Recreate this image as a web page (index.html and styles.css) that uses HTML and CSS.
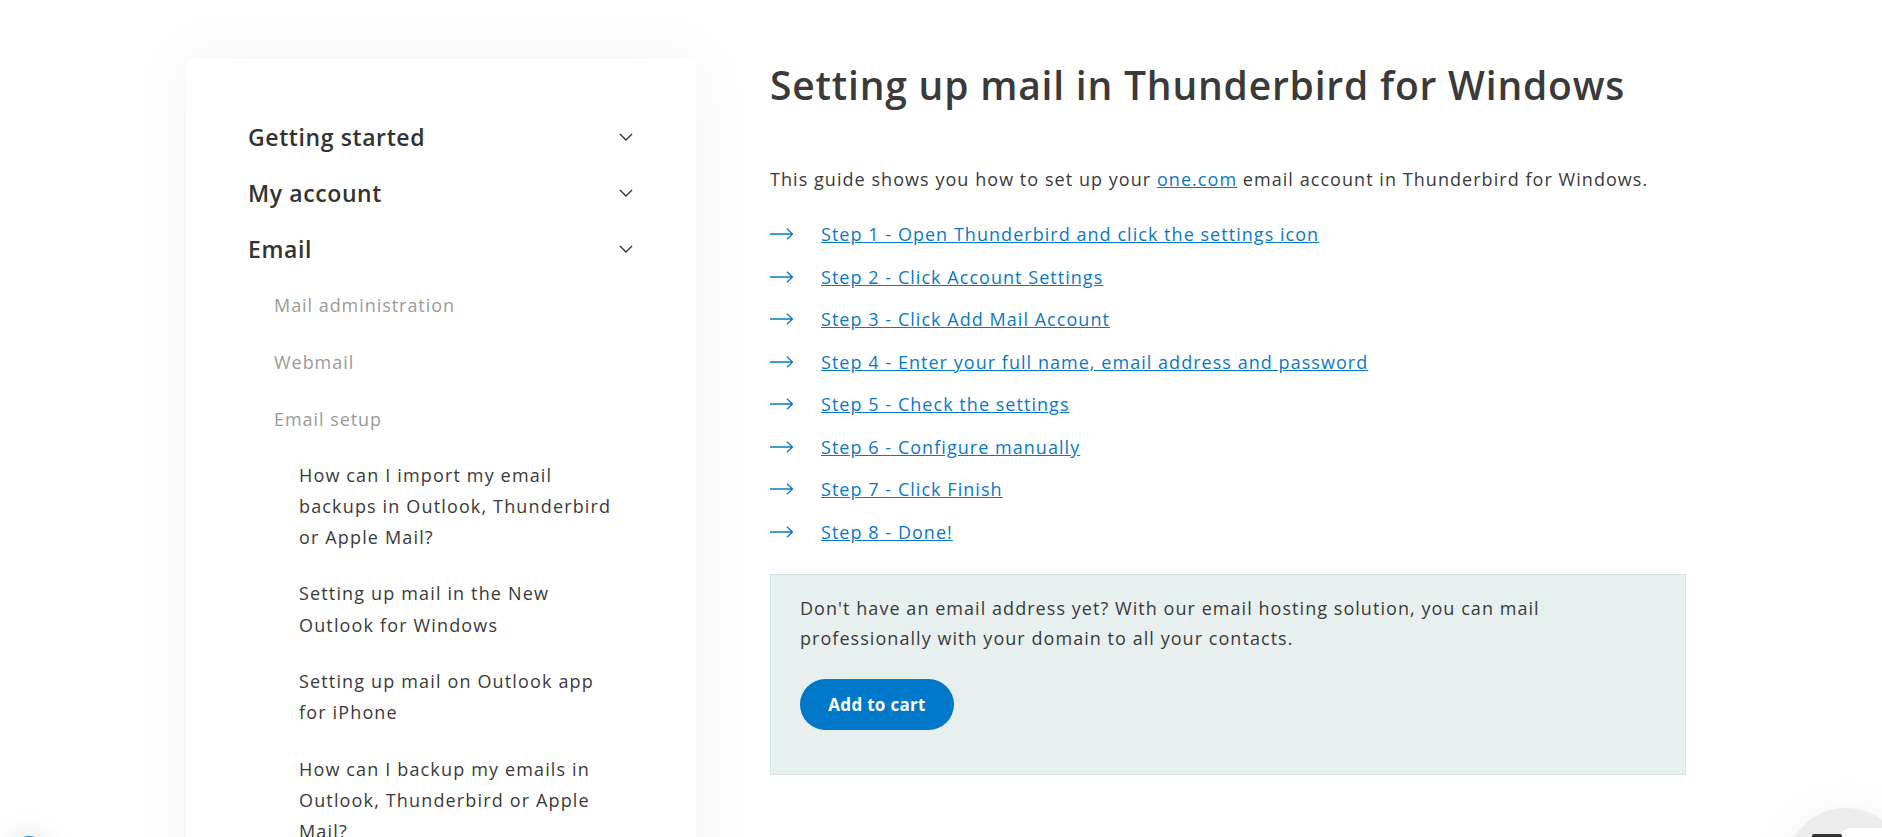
FILE: index.html
```html
<!DOCTYPE html>
<html lang="en">
<head>
<meta charset="utf-8">
<title>Setting up mail in Thunderbird for Windows</title>
<link rel="stylesheet" href="styles.css">
</head>
<body>
<div class="page">
  <aside class="sidebar">
    <nav class="nav">
      <div class="cat">
        <span>Getting started</span>
        <svg class="chev" width="14" height="8" viewBox="0 0 14 8"><path d="M1 1l6 6 6-6" fill="none" stroke="#333" stroke-width="1.4"/></svg>
      </div>
      <div class="cat">
        <span>My account</span>
        <svg class="chev" width="14" height="8" viewBox="0 0 14 8"><path d="M1 1l6 6 6-6" fill="none" stroke="#333" stroke-width="1.4"/></svg>
      </div>
      <div class="cat">
        <span>Email</span>
        <svg class="chev" width="14" height="8" viewBox="0 0 14 8"><path d="M1 1l6 6 6-6" fill="none" stroke="#333" stroke-width="1.4"/></svg>
      </div>
      <ul class="sub">
        <li class="sub-item">Mail administration</li>
        <li class="sub-item">Webmail</li>
        <li class="sub-item">Email setup</li>
      </ul>
      <ul class="articles">
        <li>How can I import my email backups in Outlook, Thunderbird or Apple Mail?</li>
        <li>Setting up mail in the New Outlook for Windows</li>
        <li>Setting up mail on Outlook app for iPhone</li>
        <li>How can I backup my emails in Outlook, Thunderbird or Apple Mail?</li>
      </ul>
    </nav>
  </aside>
  <main class="main">
    <h1 class="title">Setting up mail in Thunderbird for Windows</h1>
    <p class="intro">This guide shows you how to set up your <a href="#">one.com</a> email account in Thunderbird for Windows.</p>
    <ul class="steps">
      <li><svg class="arrow" width="24" height="12" viewBox="0 0 24 12"><path d="M0 6h22.5M17 0.8l5.5 5.2-5.5 5.2" fill="none" stroke="#0a78c8" stroke-width="1.3"/></svg><a href="#">Step 1 - Open Thunderbird and click the settings icon</a></li>
      <li><svg class="arrow" width="24" height="12" viewBox="0 0 24 12"><path d="M0 6h22.5M17 0.8l5.5 5.2-5.5 5.2" fill="none" stroke="#0a78c8" stroke-width="1.3"/></svg><a href="#">Step 2 - Click Account Settings</a></li>
      <li><svg class="arrow" width="24" height="12" viewBox="0 0 24 12"><path d="M0 6h22.5M17 0.8l5.5 5.2-5.5 5.2" fill="none" stroke="#0a78c8" stroke-width="1.3"/></svg><a href="#">Step 3 - Click Add Mail Account</a></li>
      <li><svg class="arrow" width="24" height="12" viewBox="0 0 24 12"><path d="M0 6h22.5M17 0.8l5.5 5.2-5.5 5.2" fill="none" stroke="#0a78c8" stroke-width="1.3"/></svg><a href="#">Step 4 - Enter your full name, email address and password</a></li>
      <li><svg class="arrow" width="24" height="12" viewBox="0 0 24 12"><path d="M0 6h22.5M17 0.8l5.5 5.2-5.5 5.2" fill="none" stroke="#0a78c8" stroke-width="1.3"/></svg><a href="#">Step 5 - Check the settings</a></li>
      <li><svg class="arrow" width="24" height="12" viewBox="0 0 24 12"><path d="M0 6h22.5M17 0.8l5.5 5.2-5.5 5.2" fill="none" stroke="#0a78c8" stroke-width="1.3"/></svg><a href="#">Step 6 - Configure manually</a></li>
      <li><svg class="arrow" width="24" height="12" viewBox="0 0 24 12"><path d="M0 6h22.5M17 0.8l5.5 5.2-5.5 5.2" fill="none" stroke="#0a78c8" stroke-width="1.3"/></svg><a href="#">Step 7 - Click Finish</a></li>
      <li><svg class="arrow" width="24" height="12" viewBox="0 0 24 12"><path d="M0 6h22.5M17 0.8l5.5 5.2-5.5 5.2" fill="none" stroke="#0a78c8" stroke-width="1.3"/></svg><a href="#">Step 8 - Done!</a></li>
    </ul>
    <div class="promo">
      <p class="promo-text">Don't have an email address yet? With our email hosting solution, you can mail professionally with your domain to all your contacts.</p>
      <button class="btn">Add to cart</button>
    </div>
  </main>
</div>
<div class="chat-left"></div>
<div class="chat-right"><span class="bubble"></span><span class="bar"></span></div>
</body>
</html>
```

FILE: styles.css
```css
html, body {
  margin: 0;
  padding: 0;
  background: #fff;
  overflow: hidden;
  height: 837px;
}

body {
  font-family: "Open Sans", "Liberation Sans", sans-serif;
  color: #333;
}

.page {
  width: 1510px;
  margin: 0 auto;
  padding-top: 59px;
  display: flex;
  gap: 74px;
  align-items: flex-start;
}

.sidebar {
  width: 510px;
  flex: none;
  background: #fff;
  border-radius: 4px;
  box-shadow: 0 0 60px rgba(0, 0, 0, 0.06);
  padding: 50px 62px 40px 62px;
  box-sizing: border-box;
  min-height: 820px;
}

.nav {
  display: flex;
  flex-direction: column;
}

.cat {
  height: 56px;
  display: flex;
  align-items: center;
  justify-content: space-between;
  font-size: 23px;
  font-weight: 600;
  letter-spacing: 0.6px;
  color: #333;
}

.chev {
  margin-right: 1px;
}

.sub {
  list-style: none;
  margin: 0;
  padding: 0 0 0 26px;
}

.sub-item {
  height: 56.7px;
  display: flex;
  align-items: center;
  font-size: 18px;
  letter-spacing: 0.95px;
  color: #9a9a9a;
}

.articles {
  list-style: none;
  margin: 12.5px 0 0 0;
  padding: 0 0 0 51px;
  width: 318px;
}

.articles li {
  font-size: 18px;
  line-height: 31.3px;
  letter-spacing: 1.15px;
  color: #3a3a3a;
  margin-bottom: 25px;
}

.main {
  width: 916px;
  flex: none;
}

.title {
  margin: 3px 0 0 0;
  font-size: 39px;
  line-height: 46px;
  font-weight: 600;
  color: #3a3a3a;
  letter-spacing: 0.8px;
}

.intro {
  margin: 56px 0 0 0;
  font-size: 18px;
  line-height: 30px;
  letter-spacing: 1.05px;
  color: #3a3a3a;
}

.intro a {
  color: #0a78c8;
}

.steps {
  list-style: none;
  margin: 19px 0 0 0;
  padding: 0;
}

.steps li {
  height: 42.5px;
  display: flex;
  align-items: center;
  font-size: 18px;
  letter-spacing: 1.04px;
}

.arrow {
  flex: none;
  margin-right: 27px;
}

.steps a {
  color: #0a78c8;
}

.promo {
  margin-top: 21px;
  background: #e7f0ef;
  border: 1px solid #d3e6e2;
  padding: 18px 29px 44px 29px;
  height: 201px;
  box-sizing: border-box;
}

.promo-text {
  margin: 0;
  font-size: 18px;
  line-height: 30px;
  letter-spacing: 1.05px;
  color: #3a3a3a;
  max-width: 800px;
}

.btn {
  margin-top: 26px;
  height: 51px;
  width: 154px;
  border: none;
  border-radius: 26px;
  background: #0078c9;
  color: #fff;
  font-family: "Open Sans", "Liberation Sans", sans-serif;
  font-size: 17px;
  font-weight: 700;
  letter-spacing: 0.3px;
}

.chat-left {
  position: fixed;
  left: 8px;
  top: 836px;
  width: 42px;
  height: 42px;
  border-radius: 50%;
  background: #0078c9;
  box-shadow: 0 0 30px rgba(0, 0, 0, 0.12);
}

.chat-right {
  position: fixed;
  left: 1786px;
  top: 808px;
  width: 120px;
  height: 120px;
  border-radius: 50%;
  background: #ececec;
  box-shadow: 0 0 40px rgba(0, 0, 0, 0.05);
}

.chat-right .bubble {
  position: absolute;
  left: 52px;
  top: 20px;
  width: 60px;
  height: 40px;
  border-radius: 14px;
  background: #fff;
}

.chat-right .bar {
  position: absolute;
  left: 26px;
  top: 26px;
  width: 30px;
  height: 6px;
  border-radius: 2px;
  background: #333;
}
```
